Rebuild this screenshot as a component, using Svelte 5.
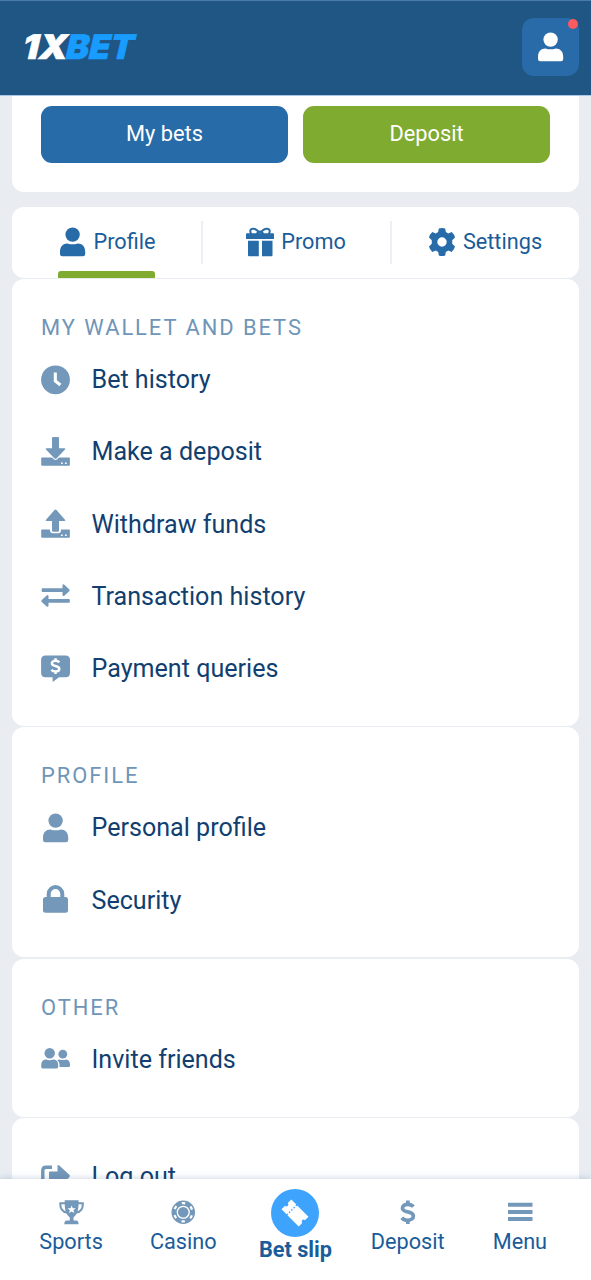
<script lang="ts">
  type Item = { icon: string; label: string };

  const tabs: Item[] = [
    { icon: 'user', label: 'Profile' },
    { icon: 'gift', label: 'Promo' },
    { icon: 'gear', label: 'Settings' },
  ];

  const sections: { title?: string; items: Item[] }[] = [
    {
      title: 'My wallet and bets',
      items: [
        { icon: 'clock', label: 'Bet history' },
        { icon: 'download', label: 'Make a deposit' },
        { icon: 'upload', label: 'Withdraw funds' },
        { icon: 'swap', label: 'Transaction history' },
        { icon: 'query', label: 'Payment queries' },
      ],
    },
    {
      title: 'Profile',
      items: [
        { icon: 'user', label: 'Personal profile' },
        { icon: 'lock', label: 'Security' },
      ],
    },
    { title: 'Other', items: [{ icon: 'users', label: 'Invite friends' }] },
    { items: [{ icon: 'logout', label: 'Log out' }] },
  ];

  const nav: Item[] = [
    { icon: 'trophy', label: 'Sports' },
    { icon: 'chip', label: 'Casino' },
    { icon: 'ticket', label: 'Bet slip' },
    { icon: 'dollar', label: 'Deposit' },
    { icon: 'bars', label: 'Menu' },
  ];

  let activeTab = $state('Profile');

  const dollar =
    'M20.5 9.5C19 7.8 17 7.2 15 7.2C12 7.2 9.7 8.7 9.7 11C9.7 16 20.4 13.3 20.4 18.7C20.4 21.3 18 22.8 15 22.8C12.6 22.8 10.5 22 9 20.3M15 3.5V7M15 23V26.5';
</script>

{#snippet icon(name: string)}
  <svg class="icon" viewBox="0 0 30 30" fill="currentColor">
    {#if name === 'user'}
      <circle cx="14.6" cy="7.6" r="7.2" />
      <path d="M2 27V24.8C2 19.5 5 16.5 9.4 16.5Q14.6 18.2 19.8 16.5C24.2 16.5 27.2 19.5 27.2 24.8V27Q27.2 29.3 24.9 29.3H4.3Q2 29.3 2 27Z" />
    {:else if name === 'gift'}
      <path d="M2 6.3H28Q29 6.3 29 7.3V12H1V7.3Q1 6.3 2 6.3ZM3 13.7H13.8V29.3H4Q3 29.3 3 28.3ZM17 13.7H27.5V28.3Q27.5 29.3 26.5 29.3H17Z" />
      <path d="M14.7 6.5C11 .3 5.6 .8 5.3 3.8C5.2 5 5.6 6 6.3 6.8M15.3 6.5C19 .3 24.4 .8 24.7 3.8C24.8 5 24.4 6 23.7 6.8M14.7 3.8L11.5 7M15.3 3.8L18.5 7" fill="none" stroke="currentColor" stroke-width="2" />
    {:else if name === 'gear'}
      <path fill-rule="evenodd" d="M11.8 1.5Q15 .3 18.2 1.5L18.8 5L21.3 6.4L24.7 5.1Q27.3 7.4 28 10.6L25.2 13.2V16.8L28 19.4Q27.3 22.6 24.7 24.9L21.3 23.6L18.8 25L18.2 28.5Q15 29.7 11.8 28.5L11.2 25L8.7 23.6L5.3 24.9Q2.7 22.6 2 19.4L4.8 16.8V13.2L2 10.6Q2.7 7.4 5.3 5.1L8.7 6.4L11.2 5ZM15 10.3A4.7 4.7 0 1 0 15 19.7A4.7 4.7 0 1 0 15 10.3Z" />
    {:else if name === 'clock'}
      <circle cx="14.5" cy="14.8" r="14.4" />
      <path d="M14.3 7.5V16L19.4 20" fill="none" stroke="#fff" stroke-width="3.1" />
    {:else if name === 'download' || name === 'upload'}
      <path d="M1 20.5H28Q28.9 20.5 28.9 21.4V27.8Q28.9 28.7 28 28.7H1Q.2 28.7 .2 27.9V21.3Q.2 20.5 1 20.5Z" />
      {#if name === 'download'}
        <path d="M11 1Q11 .1 12 .1H17Q18 .1 18 1V11.3H23.5Q25 11.4 24 12.6L15.5 21.4Q14.5 22.3 13.5 21.4L5 12.6Q4 11.4 5.5 11.3H11Z" stroke="#fff" stroke-width="2.2" paint-order="stroke" />
      {:else}
        <path d="M9 19.5H20V21Q20 24.3 17 24.3H12Q9 24.3 9 21Z" fill="#fff" />
        <path d="M11 21.5V12H5.5Q4 11.9 5 10.7L13.5 .9Q14.5-.1 15.5 .9L24 10.7Q25 11.9 23.5 12H18V21.5Q18 22.7 16.8 22.7H12.2Q11 22.7 11 21.5Z" />
      {/if}
      <path d="M20 25.5H21.7V27H20ZM24 25.5H25.7V27H24Z" fill="#fff" />
    {:else if name === 'swap'}
      <path d="M1 7.2H21.5V4.5Q21.7 2.4 23.6 3.9L28.2 8.2Q29.3 9.2 28.2 10.2L23.6 14.4Q21.7 15.9 21.5 13.7V11H1Q0 9.1 1 7.2ZM28.5 18H7.5V15.2Q7.3 13.1 5.4 14.7L.8 18.9Q-.3 19.9 .8 20.9L5.4 25.2Q7.3 26.7 7.5 24.5V21.8H28.5Q29.4 19.9 28.5 18Z" />
    {:else if name === 'query'}
      <path d="M4.5 1.4H24.5Q29 1.4 29 5.9V18.8Q29 23.3 24.5 23.3H18L12.4 27.6Q11.6 28 11.6 26.9V23.3H4.5Q.1 23.3 .1 18.8V5.9Q.1 1.4 4.5 1.4Z" />
      <path d={dollar} class="coin" transform="translate(4.2 1.8) scale(.69)" />
    {:else if name === 'lock'}
      <path d="M7.7 13V8.9A6.8 6.8 0 0 1 21.3 8.9V13" fill="none" stroke="currentColor" stroke-width="4" />
      <rect x="2" y="12" width="25" height="15.8" rx="2.5" />
    {:else if name === 'users'}
      <circle cx="8.7" cy="9.3" r="5.2" />
      <path d="M.2 22.8V21.3Q.2 15.6 5.3 15.6Q8.7 17 12 15.6Q17.2 15.6 17.2 21.3V22.8Q17.2 24.4 15.7 24.4H1.7Q.2 24.4 .2 22.8Z" />
      <circle cx="21.8" cy="10.2" r="4.4" />
      <path d="M16 16L18.5 15.5Q22 16.7 25 15.5Q29 16.1 29 20.7V21.8Q29 23 27.8 23H18.5Q19 18.2 16 16Z" />
    {:else if name === 'logout'}
      <path d="M11 5.3H5Q1.8 5.3 1.8 8.5V22Q1.8 25 5 25H11" fill="none" stroke="currentColor" stroke-width="3.4" />
      <path d="M16.5 4.2Q16.7 2.2 18.3 3.5L28.3 12.8Q29.5 14 28.3 15.2L18.3 25Q16.5 26.2 16.5 24V19.5H9Q8 19.5 8 18.5V10.5Q8 9.5 9 9.5H16.5Z" />
    {:else if name === 'trophy'}
      <path d="M7 .3H24V3C24 13 22 18 17.8 21V25H21Q24 25.2 24 29.7H6.5Q6.5 25.2 9.5 25H13.2V21C9 18 7 13 7 3Z" />
      <path d="M8 3.9H1.6C1.3 10.5 4 14.5 10 15.3M23 3.9H29.2C29.5 10.5 27 14.5 21 15.3" fill="none" stroke="currentColor" stroke-width="2.5" />
      <path d="M15.5 6.8L16.9 10.2H20.6L17.7 12.5L18.8 16L15.5 14L12.2 16L13.3 12.5L10.4 10.2H14.1Z" fill="#fff" />
    {:else if name === 'chip'}
      <circle cx="15" cy="15" r="14.4" />
      <circle cx="15" cy="15" r="11.2" fill="none" stroke="#fff" stroke-width="2.7" stroke-dasharray="4.2 7.529" stroke-dashoffset="-3.76" />
      <circle cx="15" cy="15" r="7.3" fill="none" stroke="#fff" stroke-width="1.6" />
    {:else if name === 'ticket'}
      <g transform="rotate(45 15 15)">
        <path d="M1 7H9.2V23H1V17.2A2.2 2.2 0 0 0 1 12.8ZM10.6 7H29V12.8A2.2 2.2 0 0 0 29 17.2V23H10.6Z" />
        <path d="M9.9 8.5V22" stroke="currentColor" stroke-width="2.4" stroke-dasharray="2 1.7" />
      </g>
    {:else if name === 'dollar'}
      <path d={dollar} class="sign" transform="translate(-3 -3.75) scale(1.25)" />
    {:else if name === 'bars'}
      <path d="M0 3.5H30V8.4H0ZM0 12.2H30V17.1H0ZM0 20.9H30V25.8H0Z" />
    {/if}
  </svg>
{/snippet}

<div class="app">
  <header>
    <svg class="logo" viewBox="0 0 114 30">
      <g transform="translate(0 27) skewX(-13)">
        <text class="mark" x="-3.5" y="0" textLength="45" lengthAdjust="spacingAndGlyphs">1X</text>
        <text class="name" x="40" y="0" textLength="68" lengthAdjust="spacingAndGlyphs">BET</text>
      </g>
    </svg>
    <button class="account" aria-label="Account">
      {@render icon('user')}
      <span class="dot"></span>
    </button>
  </header>

  <main>
    <div class="card actions">
      <button class="btn">My bets</button>
      <button class="btn green">Deposit</button>
    </div>

    <div class="card tabs">
      {#each tabs as tab}
        <button class="tab" class:active={tab.label === activeTab} onclick={() => (activeTab = tab.label)}>
          <span class="tab-inner">{@render icon(tab.icon)}{tab.label}</span>
        </button>
      {/each}
    </div>

    {#each sections as section}
      <section class="card group" class:untitled={!section.title}>
        {#if section.title}
          <h2>{section.title}</h2>
        {/if}
        {#each section.items as item}
          <div class="row">
            {@render icon(item.icon)}
            <span>{item.label}</span>
          </div>
        {/each}
      </section>
    {/each}
  </main>

  <nav>
    {#each nav as item}
      <div class="nav-item" class:slip={item.icon === 'ticket'}>
        <span class="nav-icon">{@render icon(item.icon)}</span>
        <span>{item.label}</span>
      </div>
    {/each}
  </nav>
</div>

<style>
  :global(body) {
    margin: 0;
    background: #e9edf2;
  }
  .app {
    height: 1280px;
    display: flex;
    flex-direction: column;
    overflow: hidden;
    background: #e9edf2;
    font-family: Roboto, sans-serif;
    color: #1a5c9a;
  }
  button {
    border: none;
    background: none;
    padding: 0;
    font: inherit;
    color: inherit;
    cursor: pointer;
  }
  .icon {
    display: block;
    width: 30px;
    height: 30px;
    flex: none;
    overflow: visible;
  }
  .coin,
  .sign {
    fill: none;
    stroke-width: 3.6;
  }
  .coin {
    stroke: #fff;
  }
  .sign {
    stroke: currentColor;
  }
  header {
    box-sizing: border-box;
    height: 96px;
    flex: none;
    display: flex;
    align-items: center;
    justify-content: space-between;
    padding: 0 12px 2px 24px;
    background: #205683;
    border-top: 1px solid #4a7ba8;
    border-bottom: 1px solid #a9c8e6;
  }
  .logo {
    width: 114px;
    height: 30px;
    overflow: visible;
  }
  .logo text {
    font-family: Inter, sans-serif;
    font-weight: 900;
    font-size: 34px;
    stroke-width: 0.6;
  }
  .mark {
    fill: #fff;
    stroke: #fff;
  }
  .name {
    fill: #189cff;
    stroke: #189cff;
  }
  .account {
    position: relative;
    width: 57px;
    height: 58px;
    display: flex;
    align-items: center;
    justify-content: center;
    border-radius: 12px;
    background: #286ba8;
    color: #fff;
  }
  .dot {
    position: absolute;
    top: 1px;
    right: 1px;
    width: 10px;
    height: 10px;
    border-radius: 50%;
    background: #fa5a60;
  }
  main {
    flex: 1;
    min-height: 0;
    overflow: hidden;
    padding: 0 12px;
  }
  .card {
    box-sizing: border-box;
    background: #fff;
    border-radius: 12px;
  }
  .actions {
    display: flex;
    gap: 15px;
    height: 96px;
    padding: 10px 29px 29px;
    margin-bottom: 15px;
    border-radius: 0 0 12px 12px;
  }
  .btn {
    flex: 1;
    height: 57px;
    padding-bottom: 2px;
    border-radius: 11px;
    background: #276ba8;
    color: #fff;
    font-size: 21.8px;
  }
  .btn.green {
    background: #7fab30;
  }
  .tabs {
    display: flex;
    height: 71px;
    margin-bottom: 1px;
  }
  .tab {
    position: relative;
    flex: 1;
    display: flex;
    justify-content: center;
    font-size: 21.7px;
  }
  .tab + .tab::before {
    content: '';
    position: absolute;
    left: 0;
    top: 14px;
    width: 2px;
    height: 43px;
    background: #eceff4;
  }
  .tab-inner {
    box-sizing: border-box;
    display: flex;
    align-items: center;
    gap: 6px;
    height: 71px;
    padding-bottom: 2px;
    position: relative;
  }
  .tab .icon {
    color: #276ba8;
  }
  .active .tab-inner::after {
    content: '';
    position: absolute;
    left: 0;
    right: 0;
    bottom: 0;
    height: 7px;
    border-radius: 3px 3px 0 0;
    background: #7fab30;
  }
  .group {
    padding: 33px 29px 21px;
    margin-bottom: 1.5px;
  }
  .untitled {
    padding-top: 22.5px;
  }
  h2 {
    margin: 0;
    height: 31.5px;
    line-height: 31.5px;
    font-size: 21.9px;
    font-weight: 400;
    letter-spacing: 1.95px;
    text-transform: uppercase;
    color: #6f95b8;
  }
  .row {
    display: flex;
    align-items: center;
    gap: 20.5px;
    height: 72.28px;
    font-size: 25.1px;
    color: #113f70;
  }
  .row .icon {
    color: #7398b9;
  }
  nav {
    box-sizing: border-box;
    position: relative;
    flex: none;
    height: 101px;
    display: grid;
    grid-template-columns: repeat(5, 1fr);
    padding: 9px 15px 0;
    background: #fff;
    box-shadow: 0 -1px 6px rgba(40, 80, 130, 0.22);
  }
  .nav-item {
    display: flex;
    flex-direction: column;
    align-items: center;
    font-size: 21.7px;
    line-height: 26px;
  }
  .nav-icon {
    display: flex;
    align-items: center;
    justify-content: center;
    height: 40px;
    padding: 4px 0 0;
    margin-bottom: -3px;
    color: #7398b9;
  }
  .nav-icon .icon {
    width: 24.5px;
    height: 24.5px;
  }
  .slip {
    font-weight: 700;
  }
  .slip .nav-icon {
    width: 48px;
    height: 48px;
    padding: 0;
    margin: 1px 0 0;
    border-radius: 50%;
    background: #3ea3fd;
    color: #fff;
  }
  .slip .nav-icon .icon {
    width: 26px;
    height: 26px;
  }
</style>
